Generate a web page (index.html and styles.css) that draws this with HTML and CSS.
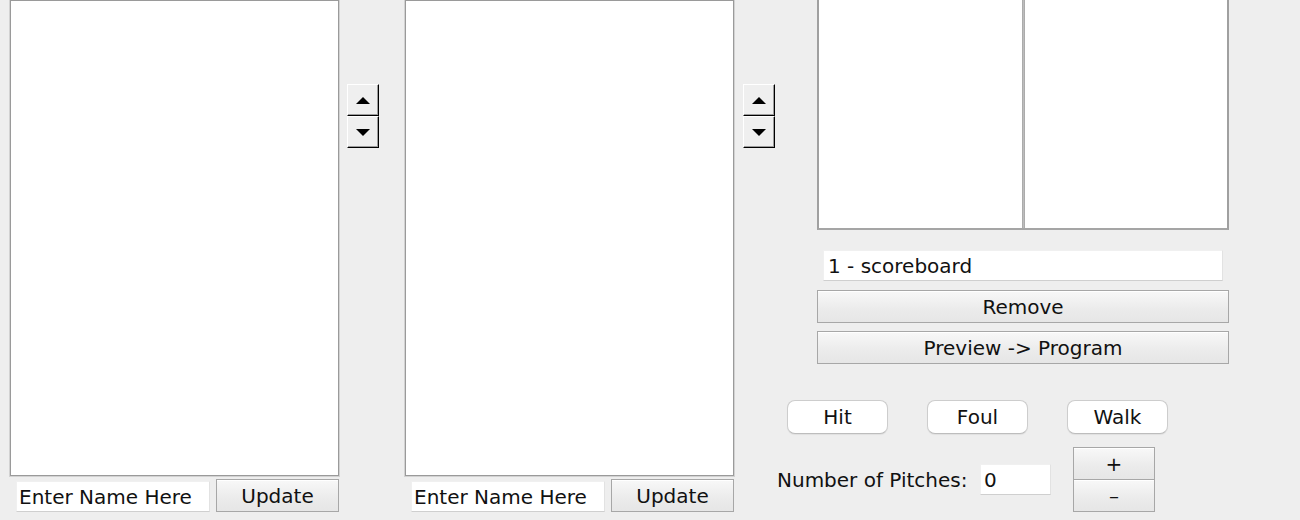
FILE: index.html
```html
<!DOCTYPE html>
<html>
<head>
<meta charset="utf-8">
<link rel="stylesheet" href="styles.css">
</head>
<body>
<div class="app">
  <div class="col">
    <div class="list"></div>
    <div class="edit-row">
      <div class="field name-field">Enter Name Here</div>
      <div class="btn update-btn">Update</div>
    </div>
  </div>
  <div class="arrows arrows-1">
    <div class="arrow-btn"><span class="tri-up"></span></div>
    <div class="arrow-btn"><span class="tri-down"></span></div>
  </div>
  <div class="col">
    <div class="list"></div>
    <div class="edit-row">
      <div class="field name-field">Enter Name Here</div>
      <div class="btn update-btn">Update</div>
    </div>
  </div>
  <div class="right">
    <div class="right-top">
      <div class="arrows arrows-2">
        <div class="arrow-btn"><span class="tri-up"></span></div>
        <div class="arrow-btn"><span class="tri-down"></span></div>
      </div>
      <div class="panel">
        <div class="split">
          <div class="split-pane"></div>
          <div class="split-divider"></div>
          <div class="split-pane"></div>
        </div>
        <div class="field scene-field">1 - scoreboard</div>
        <div class="btn wide-btn remove-btn">Remove</div>
        <div class="btn wide-btn preview-btn">Preview -&gt; Program</div>
      </div>
    </div>
    <div class="action-row">
      <div class="round-btn">Hit</div>
      <div class="round-btn">Foul</div>
      <div class="round-btn">Walk</div>
    </div>
    <div class="pitch-row">
      <div class="pitch-label">Number of Pitches:</div>
      <div class="field pitch-field">0</div>
      <div class="stepper">
        <div class="btn step-btn">+</div>
        <div class="btn step-btn">–</div>
      </div>
    </div>
  </div>
</div>
</body>
</html>
```
FILE: styles.css
```css
* { box-sizing: border-box; }
html, body {
  margin: 0;
  padding: 0;
  background: #eeeeee;
  width: 1300px;
  height: 520px;
  overflow: hidden;
}
body {
  font-family: "DejaVu Sans", "Liberation Sans", sans-serif;
  font-size: 20px;
  color: #111;
}
.app {
  display: flex;
  padding-left: 10px;
  height: 520px;
}
.col {
  width: 329px;
  display: flex;
  flex-direction: column;
}
.list {
  height: 476px;
  background: #fff;
  border: 1px solid #9a9a9a;
  box-shadow: 0 0 0 1px #d2d2d2;
}
.edit-row {
  display: flex;
  margin-top: 3px;
  align-items: flex-start;
}
.field {
  background: #fff;
  border: 1px solid #f0f0f0;
  border-bottom: 1px solid #cfcfcf;
  border-right: 1px solid #e2e2e2;
  display: flex;
  align-items: center;
  padding-left: 2px;
  white-space: nowrap;
  overflow: hidden;
}
.name-field {
  width: 194px;
  height: 31px;
  margin-top: 2px;
  margin-left: 6px;
}
.btn {
  display: flex;
  align-items: center;
  justify-content: center;
  border: 1px solid #a7a7a7;
  background: linear-gradient(#f8f8f8, #ebebeb 60%, #e6e6e6);
  box-shadow: inset 0 1px 0 #ffffff;
  white-space: nowrap;
}
.update-btn {
  width: 123px;
  height: 33px;
  margin-left: 6px;
}
.arrows {
  display: flex;
  flex-direction: column;
  padding-top: 84px;
}
.arrows-1 {
  width: 66px;
  padding-left: 8px;
}
.arrows-2 {
  width: 83px;
  padding-left: 9px;
}
.arrow-btn {
  width: 32px;
  height: 32px;
  background: #efefef;
  border: 1px solid;
  border-color: #ffffff #000000 #000000 #ffffff;
  box-shadow: inset -1px -1px 0 #9c9c9c;
  display: flex;
  align-items: center;
  justify-content: center;
}
.tri-up {
  width: 0;
  height: 0;
  border-left: 7px solid transparent;
  border-right: 7px solid transparent;
  border-bottom: 7px solid #000;
}
.tri-down {
  width: 0;
  height: 0;
  border-left: 7px solid transparent;
  border-right: 7px solid transparent;
  border-top: 7px solid #000;
}
.right {
  display: flex;
  flex-direction: column;
}
.right-top {
  display: flex;
}
.panel {
  width: 412px;
  display: flex;
  flex-direction: column;
}
.split {
  height: 230px;
  display: flex;
  border: 1px solid #9a9a9a;
  border-top: none;
  border-left: 2px solid #a0a0a0;
  border-right: 2px solid #a0a0a0;
  border-bottom: 2px solid #a5a5a5;
}
.split-pane {
  flex: 1;
  background: #fff;
}
.split-divider {
  width: 3px;
  background: linear-gradient(90deg, #a3a3a3, #bdbdbd, #a3a3a3);
}
.scene-field {
  height: 31px;
  margin: 20px 6px 0 6px;
  padding-left: 4px;
}
.wide-btn {
  height: 33px;
}
.remove-btn { margin-top: 9px; }
.preview-btn { margin-top: 8px; }
.action-row {
  display: flex;
  gap: 39px;
  margin-top: 36px;
  padding-left: 53px;
}
.round-btn {
  width: 101px;
  height: 34px;
  background: #fff;
  border: 1px solid #cdcdcd;
  border-bottom-color: #bdbdbd;
  border-radius: 8px;
  box-shadow: 0 1px 1px rgba(0, 0, 0, 0.06);
  display: flex;
  align-items: center;
  justify-content: center;
}
.pitch-row {
  display: flex;
  align-items: center;
  margin-top: 13px;
  padding-left: 43px;
}
.pitch-label {
  width: 196px;
  white-space: nowrap;
}
.pitch-field {
  width: 71px;
  height: 31px;
  margin-left: 7px;
  padding-left: 3px;
}
.stepper {
  display: flex;
  flex-direction: column;
  margin-left: 22px;
}
.step-btn {
  width: 82px;
  height: 33px;
}
.step-btn + .step-btn {
  margin-top: -1px;
}
```
